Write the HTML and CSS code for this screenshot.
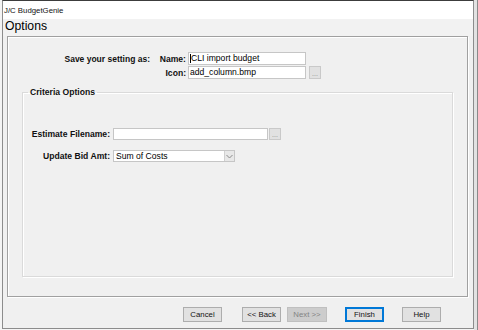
FILE: index.html
```html
<!DOCTYPE html>
<html>
<head>
<meta charset="utf-8">
<link rel="stylesheet" href="styles.css">
</head>
<body>
<div class="screen">
  <div class="window">
    <div class="titlebar">J/C BudgetGenie</div>
    <div class="header">Options</div>
    <div class="panel">
      <div class="save-grid">
        <span class="lbl lbl-main">Save your setting as:</span>
        <span class="lbl">Name:</span>
        <div class="input"><span class="caret"></span>CLI import budget</div>
        <span></span>
        <span></span>
        <span class="lbl">Icon:</span>
        <div class="input">add_column.bmp</div>
        <div class="browse">...</div>
      </div>
      <fieldset class="group">
        <legend>Criteria Options</legend>
        <div class="crit-grid">
          <span class="lbl">Estimate Filename:</span>
          <div class="input input-wide"></div>
          <div class="browse">...</div>
          <span class="lbl">Update Bid Amt:</span>
          <div class="select">
            <span class="select-text">Sum of Costs</span>
            <span class="select-btn">
              <svg width="7" height="5" viewBox="0 0 7 5"><path d="M0.5 1 L3.5 4 L6.5 1" fill="none" stroke="#8a8a8a" stroke-width="1"/></svg>
            </span>
          </div>
          <span></span>
        </div>
      </fieldset>
    </div>
    <div class="buttons">
      <div class="btn btn-cancel">Cancel</div>
      <div class="btn btn-back">&lt;&lt; Back</div>
      <div class="btn btn-next disabled">Next &gt;&gt;</div>
      <div class="btn btn-finish default">Finish</div>
      <div class="btn btn-help">Help</div>
    </div>
  </div>
  <div class="edge"></div>
</div>
</body>
</html>
```

FILE: styles.css
```css
* { box-sizing: border-box; }
html, body { margin: 0; padding: 0; }
body {
  width: 478px;
  height: 330px;
  background: #f4f4f4;
  font-family: "Liberation Sans", Arial, sans-serif;
  color: #000;
  overflow: hidden;
}
.screen {
  display: flex;
  height: 330px;
  padding-left: 2px;
}
.window {
  width: 472px;
  height: 329px;
  border: 1px solid #8c8c8c;
  border-top-color: #3c3c3c;
  background: #f0f0f0;
  display: flex;
  flex-direction: column;
}
.edge {
  width: 4px;
  height: 330px;
  background: #e2e2e2;
  border-right: 1px solid #8a8a8a;
}
.titlebar {
  height: 18px;
  background: #fff;
  font-size: 7.8px;
  line-height: 16px;
  padding: 2px 0 0 1px;
  color: #111;
}
.header {
  height: 17px;
  font-size: 12.2px;
  line-height: 15px;
  padding-left: 2px;
  color: #000;
  background: #f2f2f2;
}
.panel {
  margin: 0 5px 0 4px;
  height: 261px;
  border: 1px solid #a0a0a0;
  box-shadow: inset 1px 1px 0 #fff, 1px 1px 0 #fff;
  padding: 15px 14px 0 14px;
  display: flex;
  flex-direction: column;
}
.lbl {
  font-weight: bold;
  font-size: 8.6px;
  text-align: right;
  white-space: nowrap;
  color: #111;
}
.save-grid {
  display: grid;
  grid-template-columns: 130px 36px 118px 12px;
  grid-template-rows: 13px 13px;
  row-gap: 1px;
  align-items: center;
}
.save-grid .lbl { padding-right: 2px; }
.save-grid .lbl-main { font-size: 8.5px; }
.save-grid .browse { margin-left: 3px; }
.input {
  height: 13px;
  background: #fff;
  border: 1px solid #c6c6c6;
  font-size: 8.6px;
  line-height: 11px;
  padding-left: 1px;
  white-space: nowrap;
  overflow: hidden;
  display: flex;
  align-items: center;
}
.caret {
  width: 1px;
  height: 9px;
  background: #000;
}
.browse {
  width: 12px;
  height: 13px;
  background: #e1e1e1;
  border: 1px solid #c9c9c9;
  font-size: 7px;
  color: #8a8a8a;
  text-align: center;
  line-height: 13px;
}
.group {
  margin: 8px 0 0 0;
  padding: 0;
  min-width: 0;
  height: 190px;
  border: 1px solid #dadada;
  box-shadow: inset 1px 1px 0 #fff, 1px 1px 0 #fff;
}
.group legend {
  font-weight: bold;
  font-size: 8.6px;
  margin-left: 5px;
  padding: 0 2px;
  color: #111;
}
.crit-grid {
  display: grid;
  grid-template-columns: 90px 155px 12px;
  grid-template-rows: 12px 12px;
  row-gap: 10px;
  align-items: center;
  margin-top: 31px;
}
.crit-grid .lbl { padding-right: 3px; }
.input-wide { height: 12px; }
.crit-grid .browse { height: 12px; line-height: 12px; margin-left: 1px; }
.select {
  width: 122px;
  height: 12px;
  background: #fff;
  border: 1px solid #c6c6c6;
  display: flex;
  align-items: center;
  justify-content: space-between;
}
.select-text {
  font-size: 8.6px;
  padding-left: 2px;
  white-space: nowrap;
}
.select-btn {
  width: 10px;
  height: 10px;
  background: #e8e8e8;
  border-left: 1px solid #d0d0d0;
  display: flex;
  align-items: center;
  justify-content: center;
}
.buttons {
  display: flex;
  margin-top: 10px;
  height: 15px;
}
.btn {
  width: 39px;
  height: 15px;
  background: #e1e1e1;
  border: 1px solid #adadad;
  font-size: 7.8px;
  line-height: 13px;
  text-align: center;
  color: #111;
}
.btn-cancel { margin-left: 180px; }
.btn-back { margin-left: 20px; }
.btn-next { margin-left: 6px; width: 40px; }
.btn-finish { margin-left: 18px; }
.btn-help { margin-left: 18px; }
.disabled {
  background: #cccccc;
  border-color: #bfbfbf;
  color: #838383;
}
.default {
  border: 1px solid #0078d7;
  box-shadow: inset 0 0 0 1px #0078d7;
}
```
